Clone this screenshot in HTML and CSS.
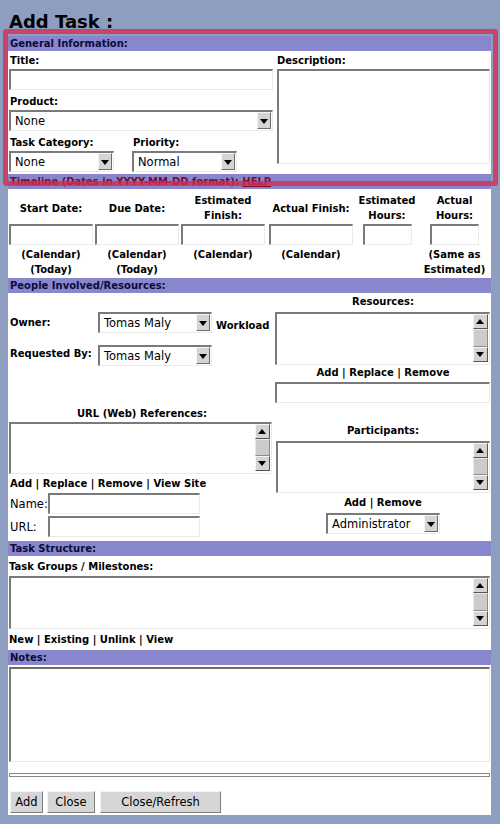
FILE: index.html
```html
<!DOCTYPE html>
<html lang="en">
<head>
  <meta charset="UTF-8">
  <meta name="viewport" content="width=device-width, initial-scale=1.0">
  <title>Add Task</title>
  <link rel="stylesheet" href="styles.css">
</head>
<body>

  <h1>Add Task :</h1>

  <form class="panel">

    <!-- General information -->
    <div class="section-head">General Information:</div>
    <div class="section general">
      <div class="general-left">
        <label class="field-label" for="title">Title:</label>
        <input type="text" id="title" class="inset title-input">

        <label class="field-label">Product:</label>
        <div class="inset select product-select">
          <span class="select-value">None</span><span class="drop-btn"></span>
        </div>

        <div class="pair">
          <div>
            <label class="field-label">Task Category:</label>
            <div class="inset select small-select">
              <span class="select-value">None</span><span class="drop-btn"></span>
            </div>
          </div>
          <div>
            <label class="field-label">Priority:</label>
            <div class="inset select small-select">
              <span class="select-value">Normal</span><span class="drop-btn"></span>
            </div>
          </div>
        </div>
      </div>
      <div class="general-right">
        <label class="field-label" for="description">Description:</label>
        <textarea id="description" class="inset desc"></textarea>
      </div>
    </div>

    <!-- Timeline -->
    <div class="section-head timeline-head">Timeline (Dates in YYYY-MM-DD format): <a href="#">HELP</a></div>
    <div class="section timeline">
      <div class="tcol">
        <div class="tlabel">Start Date:</div>
        <input type="text" class="inset date-input">
        <div class="tnote">(Calendar)<br>(Today)</div>
      </div>
      <div class="tcol">
        <div class="tlabel">Due Date:</div>
        <input type="text" class="inset date-input">
        <div class="tnote">(Calendar)<br>(Today)</div>
      </div>
      <div class="tcol">
        <div class="tlabel">Estimated<br>Finish:</div>
        <input type="text" class="inset date-input">
        <div class="tnote">(Calendar)</div>
      </div>
      <div class="tcol">
        <div class="tlabel">Actual Finish:</div>
        <input type="text" class="inset date-input">
        <div class="tnote">(Calendar)</div>
      </div>
      <div class="tcol">
        <div class="tlabel">Estimated<br>Hours:</div>
        <input type="text" class="inset hours-input">
        <div class="tnote"></div>
      </div>
      <div class="tcol">
        <div class="tlabel">Actual<br>Hours:</div>
        <input type="text" class="inset hours-input">
        <div class="tnote">(Same as<br>Estimated)</div>
      </div>
    </div>

    <!-- People -->
    <div class="section-head">People Involved/Resources:</div>
    <div class="section people">
      <div class="people-left">
        <div class="user-row owner-row">
          <label class="row-label">Owner:</label>
          <div class="inset select user-select">
            <span class="select-value">Tomas Maly</span><span class="drop-btn"></span>
          </div>
          <span class="workload">Workload</span>
        </div>
        <div class="user-row requested-row">
          <label class="row-label">Requested By:</label>
          <div class="inset select user-select">
            <span class="select-value">Tomas Maly</span><span class="drop-btn"></span>
          </div>
        </div>

        <div class="center-label url-label">URL (Web) References:</div>
        <div class="inset listbox url-list">
          <div class="list-area"></div>
          <div class="scrollbar"><span class="sb-btn sb-up"></span><span class="sb-track"></span><span class="sb-btn sb-down"></span></div>
        </div>
        <div class="links">Add | Replace | Remove | View Site</div>
        <div class="name-row">
          <label class="plain-label">Name:</label>
          <input type="text" class="inset url-input">
        </div>
        <div class="name-row">
          <label class="plain-label">URL:</label>
          <input type="text" class="inset url-input">
        </div>
      </div>

      <div class="people-right">
        <div class="center-label">Resources:</div>
        <div class="inset listbox res-list">
          <div class="list-area"></div>
          <div class="scrollbar"><span class="sb-btn sb-up"></span><span class="sb-track"></span><span class="sb-btn sb-down"></span></div>
        </div>
        <div class="center-label">Add | Replace | Remove</div>
        <input type="text" class="inset res-input">

        <div class="center-label part-label">Participants:</div>
        <div class="inset listbox part-list">
          <div class="list-area"></div>
          <div class="scrollbar"><span class="sb-btn sb-up"></span><span class="sb-track"></span><span class="sb-btn sb-down"></span></div>
        </div>
        <div class="center-label part-links">Add | Remove</div>
        <div class="inset select user-select admin-select">
          <span class="select-value">Administrator</span><span class="drop-btn"></span>
        </div>
      </div>
    </div>

    <!-- Task structure -->
    <div class="section-head">Task Structure:</div>
    <div class="section structure">
      <div class="field-label">Task Groups / Milestones:</div>
      <div class="inset listbox group-list">
        <div class="list-area"></div>
        <div class="scrollbar"><span class="sb-btn sb-up"></span><span class="sb-track"></span><span class="sb-btn sb-down"></span></div>
      </div>
      <div class="links">New | Existing | Unlink | View</div>
    </div>

    <!-- Notes -->
    <div class="section-head">Notes:</div>
    <div class="section notes">
      <textarea class="inset notes-area"></textarea>
      <hr class="divider">
      <div class="buttons">
        <button type="button" class="btn btn-add">Add</button>
        <button type="button" class="btn btn-close">Close</button>
        <button type="button" class="btn btn-refresh">Close/Refresh</button>
      </div>
    </div>

  </form>

  <!-- highlight frame drawn over the general block -->
  <div class="highlight"></div>

</body>
</html>
```

FILE: styles.css
```css
body {
  margin: 0;
  background-color: #8e9ec0;
  font-family: "DejaVu Sans", sans-serif;
  font-size: 10px;
  color: #000;
}

h1 {
  margin: 0;
  padding: 10px 9px 0;
  font-size: 18px;
  line-height: 24px;
  font-weight: bold;
}

.panel {
  width: 483px;
  margin: 2px 0 0 8px;
}

.section-head {
  height: 15px;
  line-height: 15px;
  padding-left: 2px;
  background-color: #8886cc;
  color: #0c0c3a;
  font-weight: bold;
}

.timeline-head {
  color: #7c0c2c;
}

.timeline-head a {
  color: #7c0c2c;
}

.section {
  background-color: #fff;
}

/* shared control look */
.inset {
  box-sizing: border-box;
  border-style: solid;
  border-width: 2px 1px 1px 2px;
  border-color: #7a7a7a #ebebeb #ebebeb #7a7a7a;
  background-color: #fff;
  font-family: "DejaVu Sans", sans-serif;
  font-size: 11.5px;
  padding: 0 3px;
  margin: 0;
  outline: none;
}

textarea.inset {
  display: block;
  resize: none;
}

.field-label {
  display: block;
  line-height: 15px;
  font-weight: bold;
  padding-left: 1px;
}

.select {
  display: flex;
  height: 21px;
  padding: 0;
}

.select-value {
  flex: 1;
  line-height: 18px;
  padding-left: 4px;
  white-space: nowrap;
}

.drop-btn {
  position: relative;
  box-sizing: border-box;
  width: 14px;
  margin: 0 1px 1px 0;
  background-color: #d4d4d4;
  border: 1px solid;
  border-color: #f6f6f6 #6c6c6c #6c6c6c #f6f6f6;
}

.drop-btn::after {
  content: "";
  position: absolute;
  left: 2px;
  top: 6px;
  border-left: 4px solid transparent;
  border-right: 4px solid transparent;
  border-top: 5px solid #000;
}

/* general */
.general {
  display: grid;
  grid-template-columns: 268px 1fr;
  padding: 2px 0;
}

.general-left {
  display: flex;
  flex-direction: column;
  padding-left: 1px;
}

.title-input,
.product-select {
  width: 264px;
  height: 21px;
  margin: 1px 0 4px;
}

.pair {
  display: grid;
  grid-template-columns: 123px 1fr;
}

.small-select {
  width: 105px;
  margin-top: 1px;
}

.desc {
  width: 213px;
  height: 95px;
  margin: 1px 0 0 1px;
}

/* timeline */
.timeline {
  display: grid;
  grid-template-columns: 86px 86px 86px 90px 62px 73px;
  padding: 4px 0 1px;
}

.tcol {
  display: flex;
  flex-direction: column;
  align-items: center;
  text-align: center;
  font-weight: bold;
  line-height: 15px;
}

.tlabel {
  height: 30px;
  display: flex;
  align-items: center;
}

.date-input {
  width: 84px;
  height: 21px;
  margin-top: 1px;
}

.hours-input {
  width: 49px;
  height: 21px;
  margin-top: 1px;
}

.tnote {
  height: 30px;
  margin-top: 2px;
}

/* people */
.people {
  display: grid;
  grid-template-columns: 267px 1fr;
  height: 248px;
}

.people-left {
  display: flex;
  flex-direction: column;
  padding: 19px 0 0 1px;
}

.user-row {
  display: flex;
  height: 21px;
}

.requested-row {
  margin-top: 12px;
}

.row-label {
  width: 89px;
  padding-left: 1px;
  box-sizing: border-box;
  font-weight: bold;
  line-height: 15px;
  padding-top: 3px;
}

.requested-row .row-label {
  padding-top: 1px;
}

.user-select {
  width: 114px;
}

.workload {
  align-self: flex-end;
  margin-left: 4px;
  font-weight: bold;
  line-height: 15px;
}

.center-label {
  text-align: center;
  font-weight: bold;
  line-height: 15px;
}

.url-label {
  margin-top: 40px;
}

.listbox {
  display: flex;
  padding: 0;
}

.list-area {
  flex: 1;
}

.scrollbar {
  display: flex;
  flex-direction: column;
  width: 15px;
  margin: 0 1px 2px 0;
}

.sb-btn {
  position: relative;
  box-sizing: border-box;
  height: 15px;
  background-color: #d4d4d4;
  border: 1px solid;
  border-color: #f6f6f6 #555 #555 #f6f6f6;
}

.sb-track {
  flex: 1;
  box-sizing: border-box;
  background-color: #cbcbcb;
  border: 1px solid;
  border-color: #e8e8e8 #8c8c8c #8c8c8c #e8e8e8;
}

.sb-up::after,
.sb-down::after {
  content: "";
  position: absolute;
  left: 2px;
  border-left: 4px solid transparent;
  border-right: 4px solid transparent;
}

.sb-up::after {
  top: 4px;
  border-bottom: 5px solid #000;
}

.sb-down::after {
  top: 4px;
  border-top: 5px solid #000;
}

.url-list {
  width: 263px;
  height: 52px;
  margin-top: 1px;
}

.links {
  font-weight: bold;
  line-height: 15px;
  padding-left: 1px;
  margin-top: 2px;
}

.name-row {
  display: flex;
  align-items: center;
  margin-top: 2px;
}

.plain-label {
  width: 39px;
  padding-left: 1px;
  box-sizing: border-box;
  font-size: 11.5px;
}

.url-input {
  width: 152px;
  height: 21px;
}

.people-right {
  display: flex;
  flex-direction: column;
  padding-top: 1px;
}

.res-list {
  width: 215px;
  height: 53px;
  margin-top: 3px;
}

.res-input {
  width: 215px;
  height: 21px;
  margin-top: 2px;
}

.part-label {
  margin-top: 20px;
}

.part-list {
  width: 214px;
  height: 52px;
  margin: 3px 0 0 1px;
}

.part-links {
  margin-top: 2px;
}

.admin-select {
  align-self: center;
  margin-top: 3px;
}

/* task structure */
.structure {
  padding: 3px 0;
}

.group-list {
  width: 481px;
  height: 53px;
  margin: 2px 0 0 1px;
}

.structure .links {
  margin-top: 3px;
}

/* notes */
.notes {
  padding: 2px 0;
}

.notes-area {
  width: 481px;
  height: 95px;
  margin-left: 1px;
  border-top-color: #6e6e62;
}

.divider {
  box-sizing: border-box;
  height: 4px;
  margin: 11px 1px 0;
  border: 1px solid #8a8a8a;
  background-color: #fff;
}

.buttons {
  display: flex;
  margin-top: 14px;
  padding-left: 2px;
}

.btn {
  height: 22px;
  padding: 0;
  background-color: #d6d6d6;
  border: 1px solid;
  border-color: #f4f4f4 #7c7c7c #7c7c7c #f4f4f4;
  font-family: "DejaVu Sans", sans-serif;
  font-size: 11.5px;
  color: #000;
}

.btn-add {
  width: 33px;
}

.btn-close {
  width: 48px;
  margin-left: 4px;
}

.btn-refresh {
  width: 121px;
  margin-left: 5px;
}

.highlight {
  position: absolute;
  left: 3px;
  top: 29px;
  width: 485px;
  height: 147px;
  border: 5px solid rgba(215, 40, 75, 0.75);
  border-radius: 3px;
  pointer-events: none;
}
```
